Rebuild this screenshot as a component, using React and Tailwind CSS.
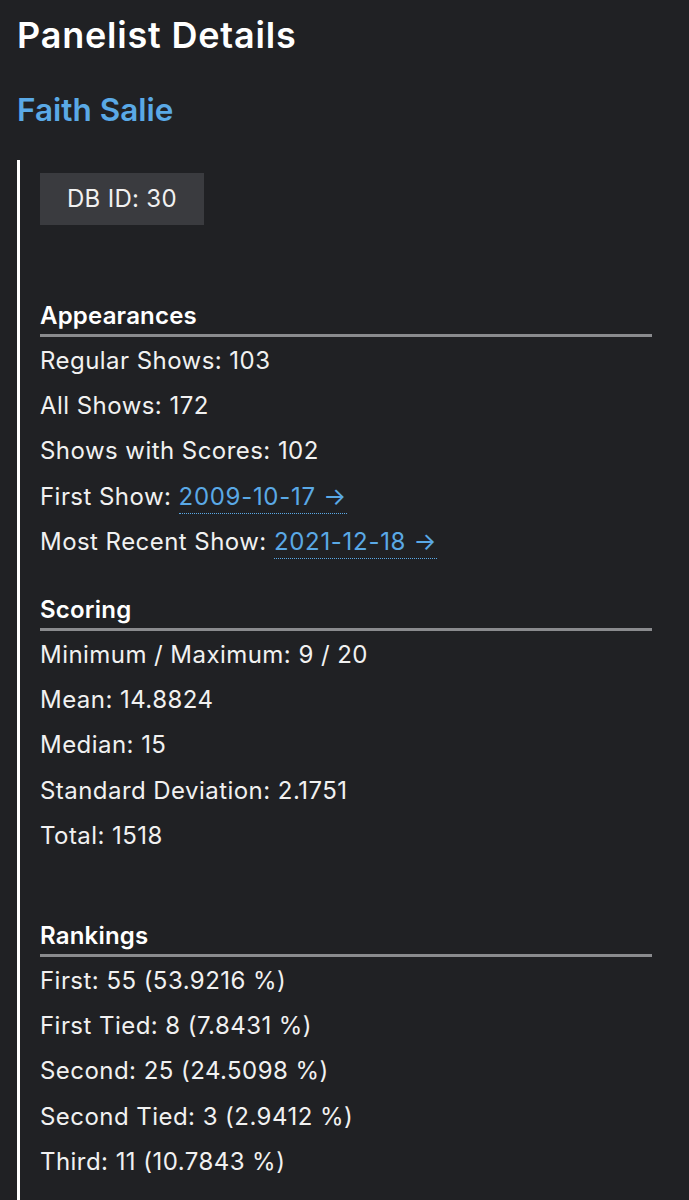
import React from 'react'

const appearances = [
  { label: 'Regular Shows', value: '103' },
  { label: 'All Shows', value: '172' },
  { label: 'Shows with Scores', value: '102' },
  { label: 'First Show', link: '2009-10-17' },
  { label: 'Most Recent Show', link: '2021-12-18' },
]

const scoring = [
  { label: 'Minimum / Maximum', value: '9 / 20' },
  { label: 'Mean', value: '14.8824' },
  { label: 'Median', value: '15' },
  { label: 'Standard Deviation', value: '2.1751' },
  { label: 'Total', value: '1518' },
]

const rankings = [
  { label: 'First', value: '55 (53.9216 %)' },
  { label: 'First Tied', value: '8 (7.8431 %)' },
  { label: 'Second', value: '25 (24.5098 %)' },
  { label: 'Second Tied', value: '3 (2.9412 %)' },
  { label: 'Third', value: '11 (10.7843 %)' },
]

function Section({ title, rows, className = '' }) {
  return (
    <section className={className}>
      <h3 className="border-b-[3px] border-[#8a8b8e] pb-[2px] text-[24px] font-semibold leading-[32px] tracking-[0.2px] text-white">
        {title}
      </h3>
      <ul className="pt-[1px]">
        {rows.map((row) => (
          <li key={row.label} className="text-[24px] leading-[45.2px] tracking-[0.45px] text-[#f1f1f1]">
            {row.label}:{' '}
            {row.link ? (
              <a href="#" className="border-b border-dotted border-[#5aa9e6] pb-[2px] tracking-[0.7px] text-[#5aa9e6]">
                {row.link} →
              </a>
            ) : (
              row.value
            )}
          </li>
        ))}
      </ul>
    </section>
  )
}

export default function App() {
  return (
    <div className="min-h-[1200px] bg-[#202124] pl-[17px] pr-[37px] font-['Inter',sans-serif] text-white">
      <h1 className="pt-[14px] text-[36px] font-semibold leading-[42px] tracking-[0.8px]">Panelist Details</h1>
      <h2 className="mt-[34px] text-[31.5px] font-semibold leading-[40px] text-[#5aa9e6]">Faith Salie</h2>
      <div className="mt-[30px] border-l-[3px] border-white pb-[20px] pl-[20px]">
        <div className="pt-[13px]">
          <span className="inline-block bg-[#3a3b3f] px-[27px] text-[24px] leading-[52px] tracking-[0.3px] text-[#f1f1f1]">DB ID: 30</span>
        </div>
        <Section title="Appearances" rows={appearances} className="mt-[75px]" />
        <Section title="Scoring" rows={scoring} className="mt-[30px]" />
        <Section title="Rankings" rows={rankings} className="mt-[62px]" />
      </div>
    </div>
  )
}
